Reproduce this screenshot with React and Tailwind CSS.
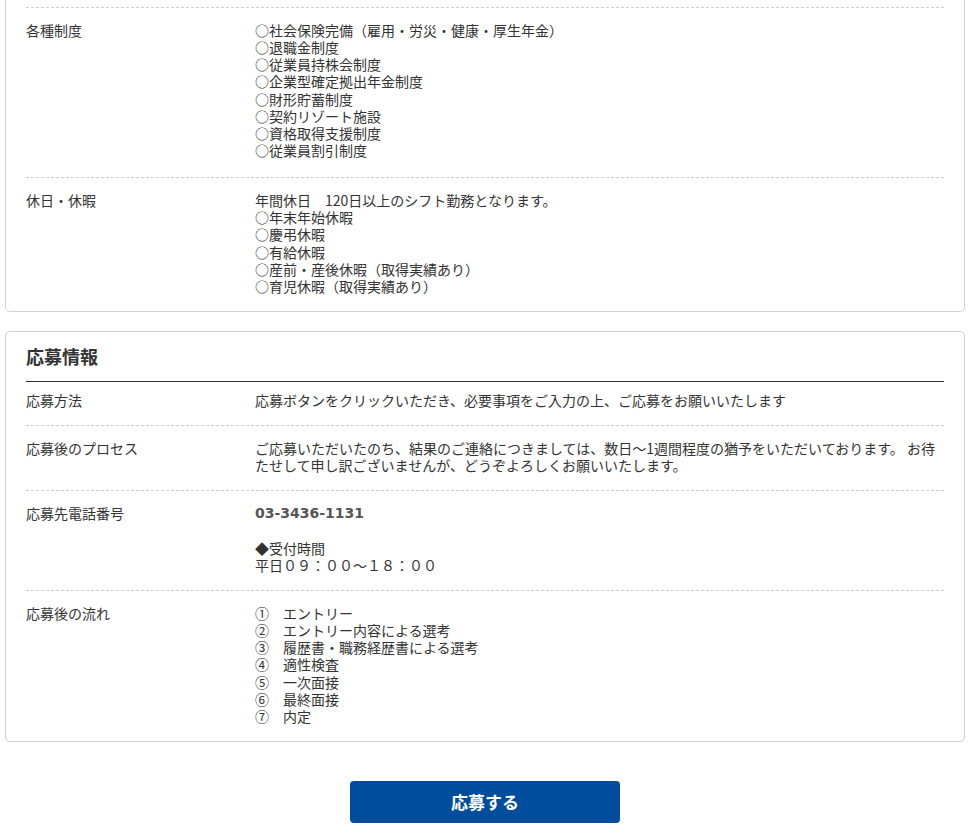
const font = { fontFamily: '"Noto Sans CJK JP", "Noto Sans", sans-serif' };

function Row({ label, first, dashed = true, className = '', children }) {
  return (
    <div
      className={
        'grid grid-cols-[229px_1fr] pb-[16px] ' +
        (first ? 'pt-[10px] ' : 'pt-[14px] ') +
        (dashed ? 'border-t border-dashed border-[#cfcfcf] ' : '') +
        className
      }
    >
      <div className="text-[#333]">{label}</div>
      <div className="text-[#333]">{children}</div>
    </div>
  );
}

function Lines({ items }) {
  return items.map((t) => <div key={t}>{t}</div>);
}

function App() {
  return (
    <div
      className="min-h-screen bg-white text-[14px] leading-[1.225]"
      style={font}
    >
      <div className="ml-[5px] w-[960px]">
        <section className="rounded-b-[5px] border-x border-b border-[#d0d0d0] px-5 pt-[7px]">
          <Row label="各種制度" className="pb-[18px]">
            <Lines
              items={[
                '○社会保険完備（雇用・労災・健康・厚生年金）',
                '○退職金制度',
                '○従業員持株会制度',
                '○企業型確定拠出年金制度',
                '○財形貯蓄制度',
                '○契約リゾート施設',
                '○資格取得支援制度',
                '○従業員割引制度',
              ]}
            />
          </Row>
          <Row label="休日・休暇" className="pt-[13px]">
            <Lines
              items={[
                '年間休日　120日以上のシフト勤務となります。',
                '○年末年始休暇',
                '○慶弔休暇',
                '○有給休暇',
                '○産前・産後休暇（取得実績あり）',
                '○育児休暇（取得実績あり）',
              ]}
            />
          </Row>
        </section>

        <section className="mt-[19px] rounded-[5px] border border-[#d0d0d0] px-5">
          <h2 className="border-b border-[#333] pb-[13px] pt-[12px] text-[18px] font-bold leading-[24px] text-[#333]">
            応募情報
          </h2>
          <Row label="応募方法" first dashed={false}>
            応募ボタンをクリックいただき、必要事項をご入力の上、ご応募をお願いいたします
          </Row>
          <Row label="応募後のプロセス">
            ご応募いただいたのち、結果のご連絡につきましては、数日～1週間程度の猶予をいただいております。
            お待たせして申し訳ございませんが、どうぞよろしくお願いいたします。
          </Row>
          <Row label="応募先電話番号">
            <div
              className="font-bold text-[#555]"
              style={{ fontFamily: '"DejaVu Sans", sans-serif' }}
            >
              03-3436-1131
            </div>
            <div>&nbsp;</div>
            <div>◆受付時間</div>
            <div>平日０９：００～１８：００</div>
          </Row>
          <Row label="応募後の流れ">
            <Lines
              items={[
                '①　エントリー',
                '②　エントリー内容による選考',
                '③　履歴書・職務経歴書による選考',
                '④　適性検査',
                '⑤　一次面接',
                '⑥　最終面接',
                '⑦　内定',
              ]}
            />
          </Row>
        </section>

        <div className="mt-[39px] flex justify-center">
          <button className="h-[42px] w-[270px] rounded-[4px] bg-[#004c9d] text-[17px] font-bold text-white">
            応募する
          </button>
        </div>
      </div>
    </div>
  );
}

export default App;
